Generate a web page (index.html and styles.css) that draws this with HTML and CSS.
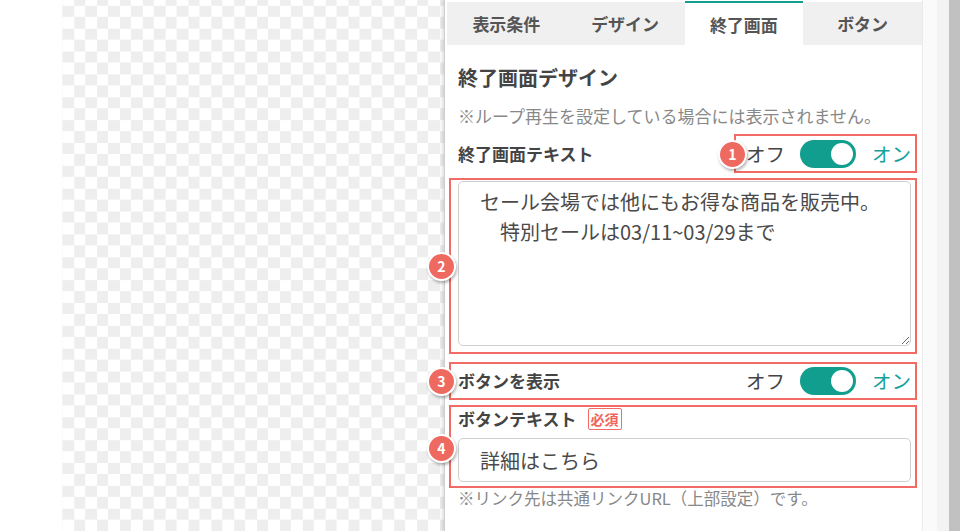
FILE: index.html
```html
<!DOCTYPE html>
<html lang="ja">
<head>
    <meta charset="UTF-8">
    <meta name="viewport" content="width=device-width, initial-scale=1.0">
    <title>終了画面デザイン</title>
    <link rel="stylesheet" href="styles.css">
</head>
<body>
    <div class="stage">
        <div class="gutter"></div>
        <div class="canvas"></div>
        <aside class="panel">
            <nav class="tabs">
                <div class="tab">表示条件</div>
                <div class="tab">デザイン</div>
                <div class="tab active">終了画面</div>
                <div class="tab">ボタン</div>
            </nav>
            <div class="panel-body">
                <h2 class="section-title">終了画面デザイン</h2>
                <p class="note">※ループ再生を設定している場合には表示されません。</p>

                <div class="row row-first">
                    <span class="label">終了画面テキスト</span>
                    <div class="switch-group mark mark-switch">
                        <span class="num num-1">1</span>
                        <span class="off">オフ</span>
                        <span class="switch"><span class="knob"></span></span>
                        <span class="on">オン</span>
                    </div>
                </div>

                <div class="mark mark-text">
                    <span class="num num-side">2</span>
                    <textarea id="message">セール会場では他にもお得な商品を販売中。
　特別セールは03/11~03/29まで</textarea>
                </div>

                <div class="mark mark-row">
                    <span class="num num-side">3</span>
                    <div class="row">
                        <span class="label">ボタンを表示</span>
                        <div class="switch-group">
                            <span class="off">オフ</span>
                            <span class="switch"><span class="knob"></span></span>
                            <span class="on">オン</span>
                        </div>
                    </div>
                </div>

                <div class="mark mark-field">
                    <span class="num num-side num-4">4</span>
                    <div class="field-label">
                        <span class="label">ボタンテキスト</span>
                        <span class="required">必須</span>
                    </div>
                    <input type="text" value="詳細はこちら">
                </div>

                <p class="note note-bottom">※リンク先は共通リンクURL（上部設定）です。</p>
            </div>
        </aside>
        <div class="rail"></div>
        <div class="scrollbar"></div>
    </div>
</body>
</html>
```

FILE: styles.css
```css
body {
    margin: 0;
    font-family: "Noto Sans CJK JP", "Noto Sans", sans-serif;
    color: #444;
    background-color: #fff;
    overflow: hidden;
}
.stage {
    display: flex;
    height: 531px;
}
.gutter {
    width: 62px;
    flex: none;
}
.canvas {
    width: 382px;
    flex: none;
    background-image: conic-gradient(#eeeeee 25%, #fff 0 50%, #eeeeee 0 75%, #fff 0);
    background-size: 22.86px 22.86px;
    background-position: 0.3px -6.1px;
}
.panel {
    width: 478px;
    flex: none;
    box-sizing: border-box;
    border-left: 1px solid #cfcfcf;
    box-shadow: -2px 0 3px rgba(0, 0, 0, 0.12);
    padding-left: 2px;
    background-color: #fff;
    position: relative;
}
.rail {
    width: 27px;
    flex: none;
    border-left: 1px solid #ececec;
    box-sizing: border-box;
    background: linear-gradient(to right, #fafafa 55%, #f3f3f3 55%);
}
.scrollbar {
    width: 11px;
    flex: none;
    background-color: #c1c1c1;
}

/* タブ */
.tabs {
    display: flex;
    margin-top: 2px;
    height: 43px;
    background-color: #f0f0f0;
}
.tab {
    flex: 1;
    display: flex;
    align-items: center;
    justify-content: center;
    font-size: 17px;
    font-weight: bold;
    color: #555;
}
.tab.active {
    background-color: #fff;
    border-top: 2px solid #129f8f;
    margin-top: -1px;
}

.panel-body {
    padding: 0 11px;
    display: flex;
    flex-direction: column;
}
.section-title {
    margin: 20px 0 0;
    font-size: 20px;
    line-height: 26px;
    color: #444;
}
.note {
    margin: 14px 0 0;
    font-size: 17px;
    line-height: 22px;
    color: #888;
}
.note-bottom {
    margin-top: 0;
    font-size: 16.5px;
    line-height: 20px;
}
.label {
    font-size: 17px;
    font-weight: bold;
    line-height: 24px;
    color: #444;
}
.row {
    display: flex;
    justify-content: space-between;
    align-items: center;
    height: 28px;
}
.row-first {
    margin-top: 13px;
}

/* オン/オフ切替 */
.switch-group {
    display: flex;
    align-items: center;
    font-size: 19.5px;
    line-height: 28px;
}
.off {
    color: #444;
    margin-right: 15px;
}
.on {
    color: #14a09c;
    margin-left: 16px;
}
.switch {
    width: 56px;
    height: 28px;
    border-radius: 14px;
    background-color: #119e8e;
    display: flex;
    align-items: center;
    justify-content: flex-end;
    padding-right: 3px;
    box-sizing: border-box;
}
.knob {
    width: 22px;
    height: 22px;
    border-radius: 50%;
    background-color: #fff;
}

/* 注釈の赤枠と番号 */
.mark {
    position: relative;
    border: 2px solid #f26c65;
}
.mark-switch {
    margin: -6px -6px -5px -12px;
    padding: 4px 4px 3px 10px;
}
.mark-text {
    margin: 10px -6px 0 -9px;
    padding: 1px 4px 6px 7px;
}
.mark-row {
    margin: 8px -6px 0 -9px;
    padding: 3px 4px 3px 7px;
}
.mark-field {
    margin: 5px -6px 0 -9px;
    padding: 0 4px 4px 7px;
}
.num {
    position: absolute;
    width: 29px;
    height: 29px;
    box-sizing: border-box;
    border: 2px solid #fff;
    border-radius: 50%;
    background-color: #ee6a61;
    box-shadow: 1px 2px 3px rgba(0, 0, 0, 0.3);
    color: #fff;
    font-size: 14px;
    font-weight: bold;
    line-height: 25px;
    text-align: center;
}
.num-1 {
    left: -18px;
    top: 50%;
    margin-top: -14px;
}
.num-side {
    left: -24px;
    top: 50%;
    margin-top: -14px;
}
.num-4 {
    top: 27px;
    margin-top: 0;
}

textarea, input {
    display: block;
    width: 100%;
    box-sizing: border-box;
    border: 1px solid #cfcfcf;
    border-radius: 5px;
    font-family: "Noto Sans CJK JP", "Noto Sans", sans-serif;
    font-size: 20px;
    color: #4a4a4a;
    background-color: #fff;
    margin: 0;
}
textarea {
    height: 165px;
    padding: 5px 10px 0 21px;
    line-height: 30px;
    resize: vertical;
}
input {
    height: 44px;
    padding: 0 10px 0 21px;
    margin-top: 7px;
}
.field-label {
    display: flex;
    align-items: center;
    height: 24px;
}
.required {
    margin-left: 11px;
    border: 1.5px solid #f26c65;
    border-radius: 2px;
    color: #f0645c;
    font-size: 14px;
    font-weight: bold;
    line-height: 20px;
    padding: 0 2px;
}
```
